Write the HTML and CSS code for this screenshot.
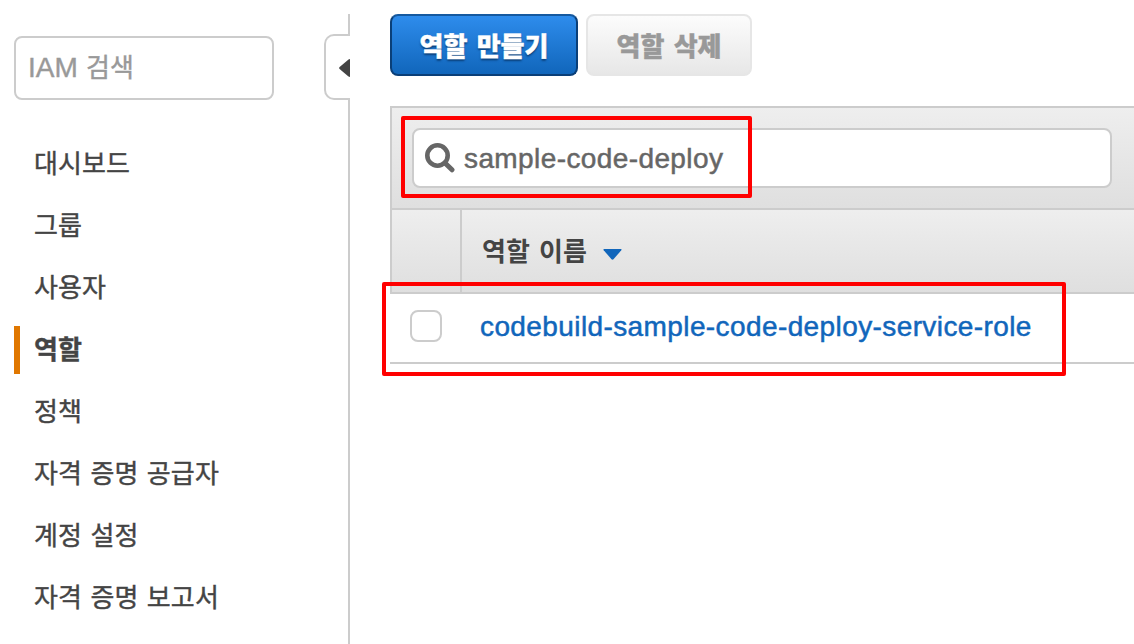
FILE: index.html
```html
<!DOCTYPE html>
<html lang="ko">
<head>
<meta charset="utf-8">
<title>IAM</title>
<link rel="stylesheet" href="styles.css">
</head>
<body>
<div class="app">
  <aside class="sidebar">
    <div class="sidebar-search"><span class="latin">IAM</span> 검색</div>
    <nav class="nav">
      <a class="nav-item">대시보드</a>
      <a class="nav-item">그룹</a>
      <a class="nav-item">사용자</a>
      <a class="nav-item active">역할</a>
      <a class="nav-item">정책</a>
      <a class="nav-item">자격 증명 공급자</a>
      <a class="nav-item">계정 설정</a>
      <a class="nav-item">자격 증명 보고서</a>
    </nav>
  </aside>
  <div class="rail">
    <div class="rail-top"></div>
    <div class="rail-tab">
      <svg class="rail-arrow" width="11" height="18" viewBox="0 0 11 18"><path d="M11 0v18L9.5 17.5.6 10Q-.3 9 .6 8L9.5.5Z" fill="#444"/></svg>
    </div>
    <div class="rail-rest"></div>
  </div>
  <main class="main">
    <div class="actions">
      <button class="btn btn-primary">역할 만들기</button>
      <button class="btn btn-disabled">역할 삭제</button>
    </div>
    <section class="panel">
      <div class="toolbar">
        <div class="filter">
          <svg class="filter-icon" width="30" height="30" viewBox="0 0 30 30" fill="none" stroke="#666"><circle cx="12.5" cy="12.5" r="10.2" stroke-width="4.6"/><path d="M20 20l7 6.8" stroke-width="5" stroke-linecap="round"/></svg>
          <span class="filter-text">sample-code-deploy</span>
        </div>
      </div>
      <div class="row head">
        <div class="cell-check"></div>
        <div class="cell-name">역할 이름
          <svg class="sort" width="19" height="11" viewBox="0 0 19 11"><path d="M1 0h17q1 .3.3 1.2L10.5 10.3q-1 .9-2 0L.7 1.2Q0 .3 1 0z" fill="#1166bb"/></svg>
        </div>
      </div>
      <div class="row item">
        <div class="cell-check"><span class="checkbox"></span></div>
        <div class="cell-name"><a class="role-link">codebuild-sample-code-deploy-service-role</a></div>
      </div>
    </section>
  </main>
  <div class="mark mark-filter"></div>
  <div class="mark mark-row"></div>
</div>
</body>
</html>
```
FILE: styles.css
```css
* { box-sizing: border-box; }
body {
  margin: 0;
  background: #fff;
  color: #444;
  font: 26px/36px "Noto Sans CJK KR", sans-serif;
  word-spacing: 2px;
}
.app {
  position: relative;
  display: flex;
  width: 1134px;
  height: 644px;
  overflow: hidden;
}
.sidebar { width: 324px; flex: none; padding: 36px 0 0 14px; }
.sidebar-search {
  width: 260px;
  height: 64px;
  border: 2px solid #ccc;
  border-radius: 8px;
  padding: 10px 12px;
  color: #999;
  white-space: nowrap;
  word-spacing: 1px;
  -webkit-text-stroke: 0.4px currentColor;
}
.latin { font-family: "Liberation Sans", sans-serif; font-size: 28px; line-height: 36px; }
.nav { display: flex; flex-direction: column; gap: 14px; margin-top: 40px; }
.nav-item {
  height: 48px;
  line-height: 44px;
  padding-left: 14px;
  border-left: 6px solid transparent;
  white-space: nowrap;
  letter-spacing: 0.1px;
  word-spacing: 1px;
  -webkit-text-stroke: 0.4px currentColor;
}
.nav-item.active { border-left-color: #e07700; font-weight: 700; }
.rail { width: 26px; flex: none; display: flex; flex-direction: column; padding-top: 14px; }
.rail-top { height: 21px; border-right: 2px solid #ccc; }
.rail-tab {
  height: 66px;
  margin-top: -1px;
  border: 2px solid #ccc;
  border-right: 0;
  border-radius: 10px 0 0 10px;
  display: flex;
  align-items: center;
  justify-content: flex-end;
  padding-top: 2px;
}
.rail-arrow { display: block; }
.rail-rest { flex: 1; margin-top: -1px; border-right: 2px solid #ccc; }
.main { flex: 1; min-width: 0; padding: 14px 0 0 40px; }
.actions { display: flex; gap: 8px; }
.btn {
  height: 62px;
  border-radius: 8px;
  padding: 0;
  font: inherit;
  font-weight: 900;
  word-spacing: 2px;
}
.btn-primary {
  width: 188px;
  border: 2px solid #0a3f78;
  border-top-color: #15599f;
  background: linear-gradient(#2e8cec, #1166bb);
  color: #fff;
  text-shadow: 0 2px 2px #0a3f78;
  -webkit-text-stroke: 0.4px #fff;
}
.btn-disabled {
  width: 166px;
  border: 2px solid #e6e6e6;
  background: linear-gradient(#fcfcfc, #e7e7e7);
  color: #999;
  -webkit-text-stroke: 0.4px #999;
}
.panel { margin-top: 30px; border-top: 2px solid #ccc; }
.toolbar {
  height: 102px;
  padding: 20px;
  border-left: 2px solid #ccc;
  border-bottom: 2px solid #ccc;
  background: linear-gradient(#eee, #dfdfdf);
}
.filter {
  width: 700px;
  height: 60px;
  border: 2px solid #ccc;
  border-radius: 8px;
  background: #fff;
  display: flex;
  align-items: center;
  gap: 9px;
  padding-left: 11px;
  color: #666;
}
.filter-text, .role-link {
  font-family: "Liberation Sans", sans-serif;
  font-size: 28px;
  line-height: 36px;
  letter-spacing: 0.4px;
  white-space: nowrap;
  -webkit-text-stroke: 0.5px currentColor;
}
.filter-text { padding-top: 2px; }
.row { display: flex; border-bottom: 2px solid #ccc; }
.head {
  height: 84px;
  border-left: 2px solid #ccc;
  background: linear-gradient(#eee, #dfdfdf);
  font-weight: 700;
}
.head .cell-check { width: 70px; border-right: 2px solid #ccc; }
.head .cell-name { display: flex; align-items: center; gap: 16px; padding: 0 0 2px 20px; }
.sort { margin-top: 8px; }
.item { height: 70px; align-items: center; padding-bottom: 4px; }
.item .cell-check { width: 90px; padding-left: 20px; }
.checkbox {
  display: block;
  width: 32px;
  height: 32px;
  border: 2px solid #ccc;
  border-radius: 8px;
}
.role-link { color: #1166bb; }
.mark { position: absolute; border: 4px solid #f00; border-radius: 2px; }
.mark-filter { left: 401px; top: 116px; width: 351px; height: 82px; }
.mark-row { left: 382px; top: 282px; width: 684px; height: 94px; }
```
